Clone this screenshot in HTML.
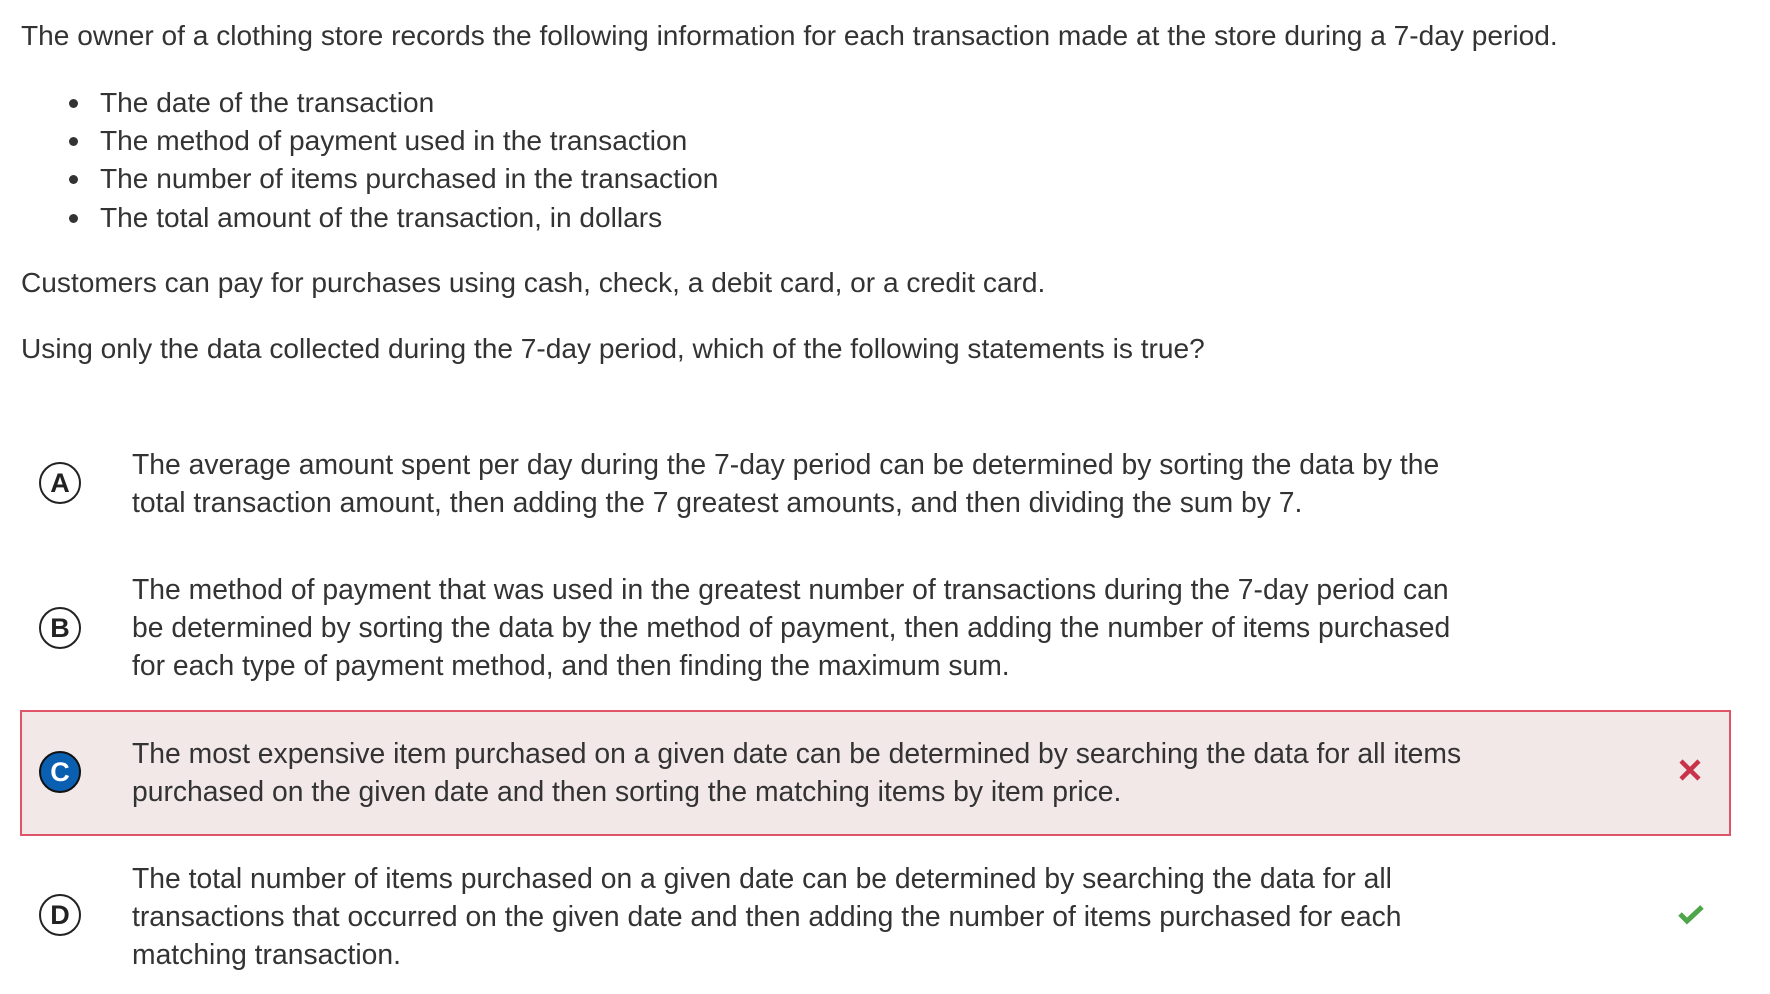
<!DOCTYPE html>
<html><head><meta charset="utf-8">
<style>
html,body{margin:0;padding:0;background:#fff;}
body{width:1770px;height:994px;position:relative;overflow:hidden;font-family:"Liberation Sans",Arial,sans-serif;color:#333;}
.t{position:absolute;white-space:nowrap;font-size:28.1px;line-height:38px;}
.o{font-size:28.3px;}
.dot{position:absolute;width:9px;height:9px;border-radius:50%;background:#333;}
.c{position:absolute;width:38px;height:38px;border:2.5px solid #222;border-radius:50%;font-weight:bold;font-size:27px;line-height:38px;text-align:center;color:#222;font-family:"Liberation Sans",Arial,sans-serif;}
.box{position:absolute;left:20px;top:710px;width:1707px;height:122px;background:#f2e8e8;border:2.5px solid #e0546a;}
</style></head><body>
<div class="t" style="left:21px;top:17px">The owner of a clothing store records the following information for each transaction made at the store during a 7-day period.</div>
<div class="dot" style="left:69px;top:99px"></div>
<div class="dot" style="left:69px;top:137px"></div>
<div class="dot" style="left:69px;top:175px"></div>
<div class="dot" style="left:69px;top:214px"></div>
<div class="t" style="left:100px;top:84px">The date of the transaction</div>
<div class="t" style="left:100px;top:122px">The method of payment used in the transaction</div>
<div class="t" style="left:100px;top:160px">The number of items purchased in the transaction</div>
<div class="t" style="left:100px;top:199px">The total amount of the transaction, in dollars</div>
<div class="t" style="left:21px;top:264px">Customers can pay for purchases using cash, check, a debit card, or a credit card.</div>
<div class="t" style="left:21px;top:330px">Using only the data collected during the 7-day period, which of the following statements is true?</div>

<div class="c" style="left:39px;top:462px">A</div>
<div class="t o" style="left:132px;top:445px">The average amount spent per day during the 7-day period can be determined by sorting the data by the</div>
<div class="t o" style="left:132px;top:483px">total transaction amount, then adding the 7 greatest amounts, and then dividing the sum by 7.</div>

<div class="c" style="left:39px;top:607px">B</div>
<div class="t o" style="left:132px;top:570px">The method of payment that was used in the greatest number of transactions during the 7-day period can</div>
<div class="t o" style="left:132px;top:608px">be determined by sorting the data by the method of payment, then adding the number of items purchased</div>
<div class="t o" style="left:132px;top:646px">for each type of payment method, and then finding the maximum sum.</div>

<div class="box"></div>
<div class="c" style="left:39px;top:751px;background:#0a5fb0;color:#fff;border-color:#111">C</div>
<div class="t o" style="left:132px;top:734px">The most expensive item purchased on a given date can be determined by searching the data for all items</div>
<div class="t o" style="left:132px;top:772px">purchased on the given date and then sorting the matching items by item price.</div>
<svg style="position:absolute;left:1678px;top:758px" width="24" height="24" viewBox="0 0 24 24"><path d="M3 3L21 21M21 3L3 21" stroke="#c8334a" stroke-width="4.5"/></svg>

<div class="c" style="left:39px;top:894px">D</div>
<div class="t o" style="left:132px;top:859px">The total number of items purchased on a given date can be determined by searching the data for all</div>
<div class="t o" style="left:132px;top:897px">transactions that occurred on the given date and then adding the number of items purchased for each</div>
<div class="t o" style="left:132px;top:935px">matching transaction.</div>
<svg style="position:absolute;left:1677px;top:903px" width="28" height="22" viewBox="0 0 28 22"><path d="M3 11L10 18L25 4" stroke="#4fa64a" stroke-width="5" fill="none"/></svg>
</body></html>
